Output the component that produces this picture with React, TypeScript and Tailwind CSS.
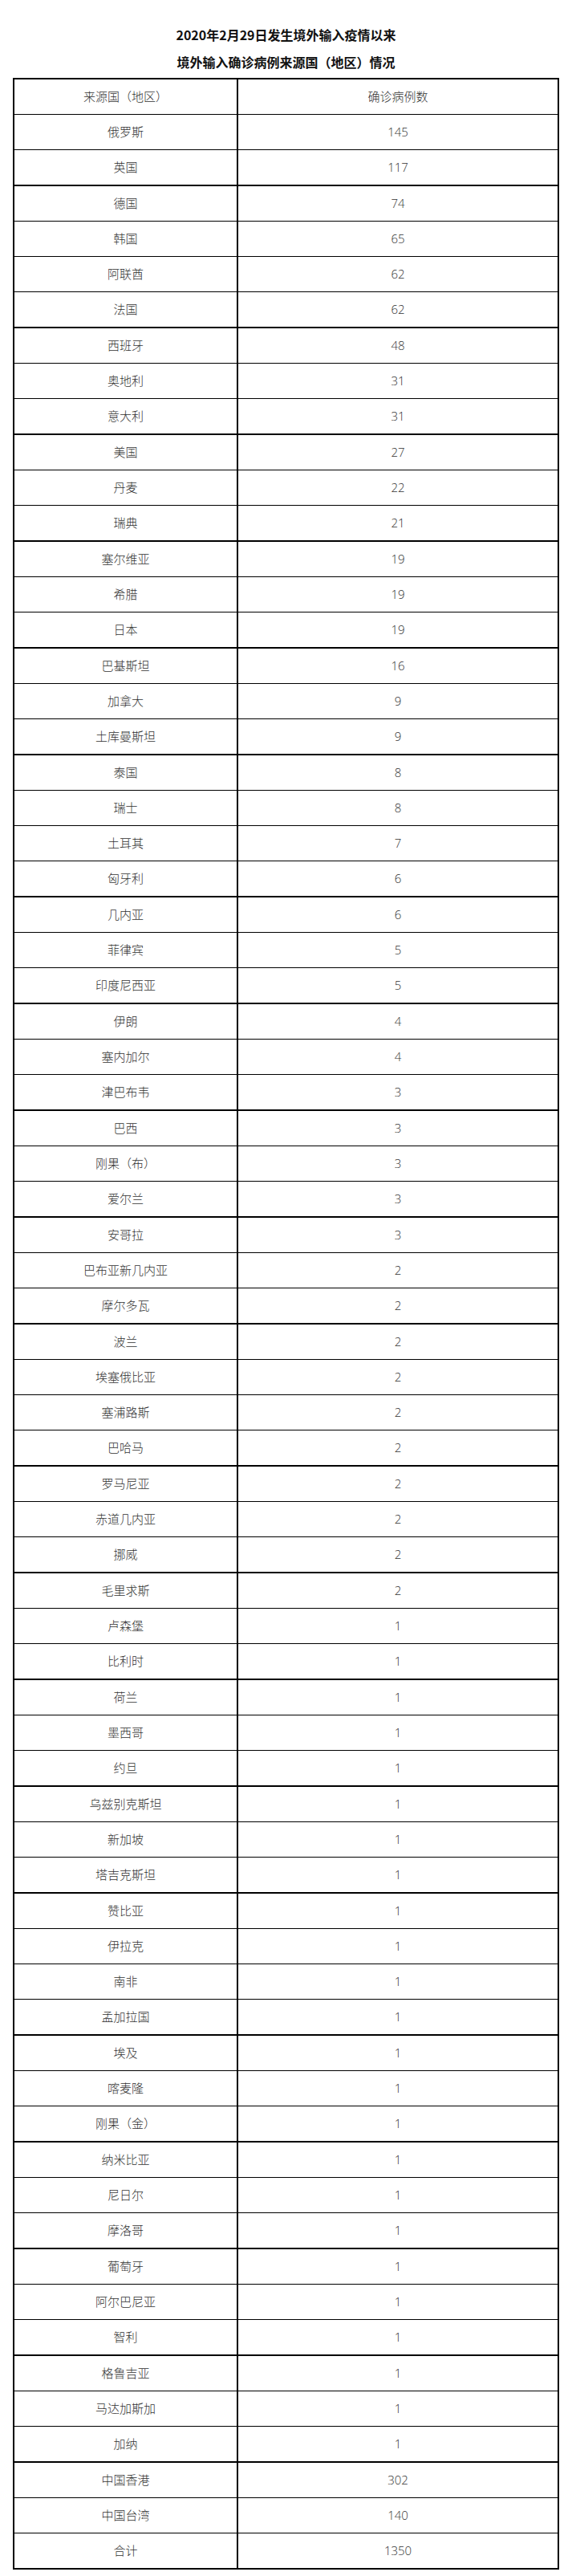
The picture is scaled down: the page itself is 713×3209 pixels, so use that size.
import React from "react";

const rows: [string, string][] = [
  ["来源国（地区）", "确诊病例数"],
  ["俄罗斯", "145"],
  ["英国", "117"],
  ["德国", "74"],
  ["韩国", "65"],
  ["阿联酋", "62"],
  ["法国", "62"],
  ["西班牙", "48"],
  ["奥地利", "31"],
  ["意大利", "31"],
  ["美国", "27"],
  ["丹麦", "22"],
  ["瑞典", "21"],
  ["塞尔维亚", "19"],
  ["希腊", "19"],
  ["日本", "19"],
  ["巴基斯坦", "16"],
  ["加拿大", "9"],
  ["土库曼斯坦", "9"],
  ["泰国", "8"],
  ["瑞士", "8"],
  ["土耳其", "7"],
  ["匈牙利", "6"],
  ["几内亚", "6"],
  ["菲律宾", "5"],
  ["印度尼西亚", "5"],
  ["伊朗", "4"],
  ["塞内加尔", "4"],
  ["津巴布韦", "3"],
  ["巴西", "3"],
  ["刚果（布）", "3"],
  ["爱尔兰", "3"],
  ["安哥拉", "3"],
  ["巴布亚新几内亚", "2"],
  ["摩尔多瓦", "2"],
  ["波兰", "2"],
  ["埃塞俄比亚", "2"],
  ["塞浦路斯", "2"],
  ["巴哈马", "2"],
  ["罗马尼亚", "2"],
  ["赤道几内亚", "2"],
  ["挪威", "2"],
  ["毛里求斯", "2"],
  ["卢森堡", "1"],
  ["比利时", "1"],
  ["荷兰", "1"],
  ["墨西哥", "1"],
  ["约旦", "1"],
  ["乌兹别克斯坦", "1"],
  ["新加坡", "1"],
  ["塔吉克斯坦", "1"],
  ["赞比亚", "1"],
  ["伊拉克", "1"],
  ["南非", "1"],
  ["孟加拉国", "1"],
  ["埃及", "1"],
  ["喀麦隆", "1"],
  ["刚果（金）", "1"],
  ["纳米比亚", "1"],
  ["尼日尔", "1"],
  ["摩洛哥", "1"],
  ["葡萄牙", "1"],
  ["阿尔巴尼亚", "1"],
  ["智利", "1"],
  ["格鲁吉亚", "1"],
  ["马达加斯加", "1"],
  ["加纳", "1"],
  ["中国香港", "302"],
  ["中国台湾", "140"],
  ["合计", "1350"],
];

// boundary index n (below row n-1) drawn thick
const thick = new Set([3, 7, 10, 13, 16, 19, 23, 26, 29, 32, 35, 39, 42, 45, 48, 51, 55, 58, 61, 64, 67, 70]);

export default function App() {
  return (
    <div className="w-[713px] min-h-[3209px] bg-white">
      <div className="pt-[26px] font-['Noto_Sans_CJK_SC',sans-serif] font-bold text-[16px] text-[#111] text-center">
        <p className="h-[34px] leading-[34px]">2020年2月29日发生境外输入疫情以来</p>
        <p className="h-[34px] leading-[34px]">境外输入确诊病例来源国（地区）情况</p>
      </div>
      <div className="mt-[3px] ml-[16px] w-[681px] border-x-2 border-t-2 border-black font-['Open_Sans','Noto_Sans_CJK_SC',sans-serif] font-light text-[15px] text-[#333]">
        {rows.map(([name, count], i) => {
          const isThick = thick.has(i + 1);
          return (
            <div
              key={i}
              className={
                isThick
                  ? "flex h-[45px] border-b-2 border-black"
                  : "flex h-[44px] border-b border-black"
              }
            >
              <div className="w-[279px] flex items-center justify-center border-r-2 border-black">
                {name}
              </div>
              <div className="flex-1 flex items-center justify-center">{count}</div>
            </div>
          );
        })}
      </div>
    </div>
  );
}
